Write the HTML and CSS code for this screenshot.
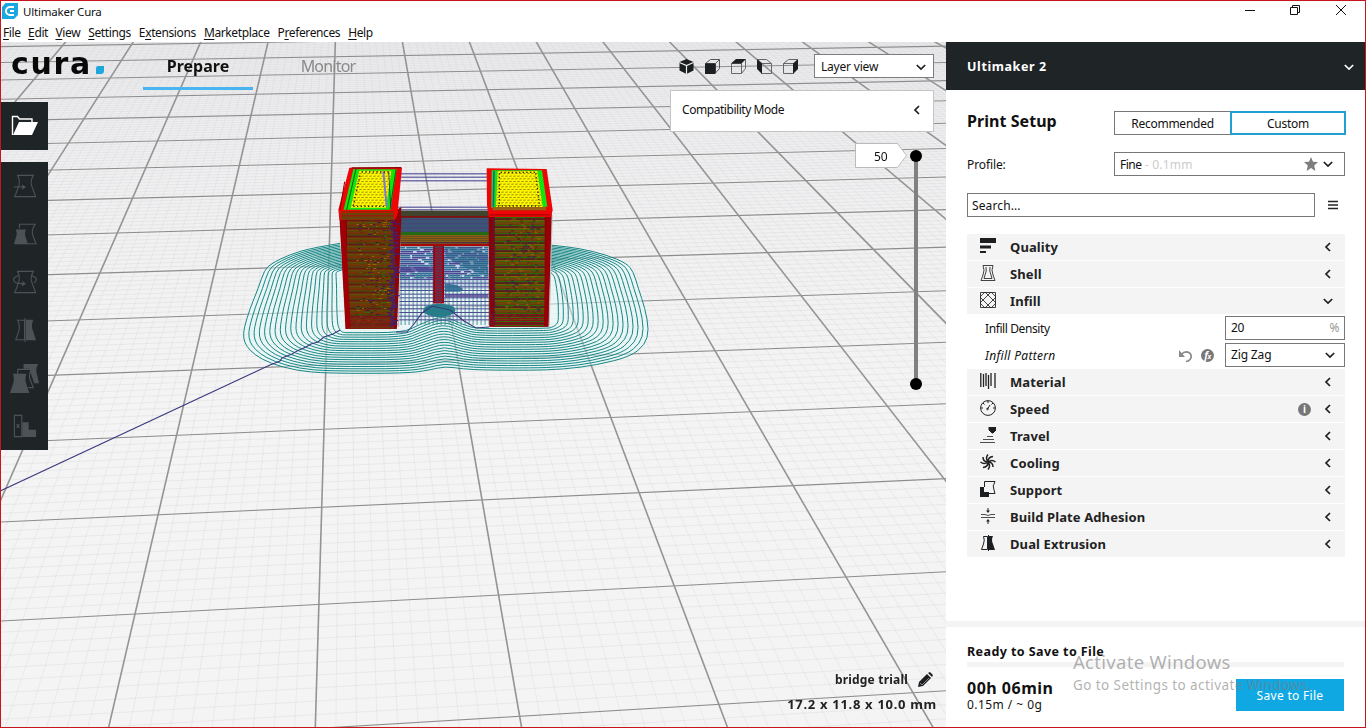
FILE: index.html
```
<!DOCTYPE html>
<html lang="en">
<head>
<meta charset="utf-8">
<title>Ultimaker Cura</title>
<link rel="stylesheet" href="styles.css">
</head>
<body>
<svg class="defs" width="0" height="0">
  <symbol id="left" viewBox="0 0 10 10"><path d="M7 1L3 5l4 4" fill="none" stroke="currentColor" stroke-width="1.7"/></symbol>
  <symbol id="down" viewBox="0 0 10 10"><path d="M.8 3L5 7l4.200-4" fill="none" stroke="currentColor" stroke-width="1.7"/></symbol>
</svg>
<div class="window">
  <header class="titlebar">
    <svg class="app-icon" width="16" height="16" viewBox="0 0 16 16"><path d="M3.500 0H16v12l-4 4H0V4z" fill="#19a9e0"/><path d="M12 4H8a4 4 0 0 0 0 8h4M12 8H8" fill="none" stroke="#fff" stroke-width="2"/></svg>
    <span class="app-title">Ultimaker Cura</span>
    <svg class="win-controls" width="104" height="12" viewBox="0 0 104 12" fill="none" stroke="#111"><path d="M0 6.500h10M45.500 3.500h7v7h-7zM47.500 3.500v-2h7v7h-2M91 1l10 10M101 1L91 11"/></svg>
  </header>
  <nav class="menubar">
    <span><u>F</u>ile</span><span><u>E</u>dit</span><span><u>V</u>iew</span><span><u>S</u>ettings</span><span>E<u>x</u>tensions</span><span><u>M</u>arketplace</span><span>P<u>r</u>eferences</span><span><u>H</u>elp</span>
  </nav>
  <main class="content">
    <section class="viewport">
      <canvas id="scene" class="scene" width="945" height="685"></canvas>
      <div class="stage-bar">
        <div class="logo"><span class="logo-word">cura</span><svg width="8" height="8" viewBox="0 0 8 8"><path d="M2 0h6v4.500Q8 8 5 8H0V3Q0 0 2 0z" fill="#1ea6dd"/></svg></div>
        <div class="tab tab-active">Prepare</div>
        <div class="tab tab-idle">Monitor</div>
        <div class="cubes">
          <svg viewBox="0 0 15 15"><path d="M7.500 0L14.500 3v8.500l-7 3.500-7-3.500V3z" fill="#1b1f22"/><path d="M.5 3.500l7 3 7-3M7.500 6.500V15" stroke="#eee" stroke-width="1.200" fill="none"/></svg>
          <svg viewBox="0 0 15 15"><path d="M.5 4.500l5-4h9l-4 4zM14.500.5v9l-4 4.500v-9.500" fill="none" stroke="#555"/><path d="M0 4.500h10.500V15H0z" fill="#1b1f22"/></svg>
          <svg viewBox="0 0 15 15"><path d="M.5 4.500h10v10H.5zM14.500.5v9l-4 5" fill="none" stroke="#666"/><path d="M0 4.500L5 0h10l-4.500 4.500z" fill="#1b1f22"/></svg>
          <svg viewBox="0 0 15 15"><path d="M4.500 4.500h10v10h-10zM.5.500h9l5 4" fill="none" stroke="#666"/><path d="M0 0l5 4.500V15L0 10z" fill="#1b1f22"/></svg>
          <svg viewBox="0 0 15 15"><path d="M.5 4.500h10v10H.5zM.5 4.500l5-4h9" fill="none" stroke="#666"/><path d="M10 4.500L15 0v10l-5 5z" fill="#1b1f22"/></svg>
        </div>
        <div class="view-select"><span>Layer view</span><svg class="chev"><use href="#down"/></svg></div>
      </div>
      <div class="compat"><span>Compatibility Mode</span><svg class="chev"><use href="#left"/></svg></div>
      <div class="work">
        <aside class="tools">
          <div class="tool tool-open"><svg width="28" height="22" viewBox="0 0 28 22"><path d="M1.500 20V1.500h5l2 2.500H21v3" fill="none" stroke="#fff" stroke-width="1.400"/><path d="M8 7h19l-6 13H2z" fill="#fff"/></svg></div>
          <div class="tool-group">
            <div class="tool"><svg viewBox="0 0 26 26"><path d="M5 1.500H22Q18 8 21 15L24.500 24.500H2L5.500 15Q8.500 8 5 1.500z"/><path d="M1 14h10"/><path class="solid" d="M10 11l4 3-4 3z"/></svg></div>
            <div class="tool"><svg viewBox="0 0 26 26"><path d="M7 7V2.500H24Q19 9 22 16L25 23.500H14"/><path class="solid" d="M3 8h11q-2 5 0 9l2 7H1l2-7q2-4 0-9z"/></svg></div>
            <div class="tool"><svg viewBox="0 0 26 26"><path d="M5 1.500H22Q18 8 21 15L24.500 24.500H2L5.500 15Q8.500 8 5 1.500z"/><path d="M6 6q-9 3-3 8l8 1M20 6q9 3 3 8"/><path class="solid" d="M10 12l4 3-4 3z"/></svg></div>
            <div class="tool"><svg viewBox="0 0 26 26"><path d="M5 2.500H12.500V23.500H3L6 15Q8 8 5 2.500zM13 0v26"/><path class="solid" d="M14 2h8q-3 7 0 13l3 9H14z"/></svg></div>
            <div class="tool"><svg class="wide" viewBox="0 0 30 30"><path class="solid" d="M14 0h15q-3 6-1 11l2 9h-5L20 5h-6z"/><path d="M8 11V5.500h14q-3 6-1 11l3 8h-5"/><path class="solid" d="M3 10h14q-2 6 0 11l3 9H0l3-9q2-5 0-11z"/></svg></div>
            <div class="tool"><svg viewBox="0 0 26 26"><path d="M1.500 1.500h8v23h-8zM4 11l3 4M7 11l-3 4"/><path class="solid" d="M10 9h7v8h8v8H10z"/></svg></div>
          </div>
        </aside>
        <div class="layer-slider">
          <svg width="70" height="250" viewBox="0 0 70 250"><path d="M1.500 2.500h42l9 12-9 12h-42z" fill="#fff" stroke="#bbb"/><path d="M62 15v228" stroke="#808080" stroke-width="4"/><circle cx="62" cy="15" r="6"/><circle cx="62" cy="243" r="6"/></svg>
          <span class="layer-value">50</span>
        </div>
      </div>
      <footer class="job">
        <div class="job-name"><span>bridge triall</span><svg width="16" height="16" viewBox="0 0 16 16"><path d="M1 15l1-5 8-8 4 4-8 8zM11 1l2-1 3 3-1 2z" fill="#1b1f22"/><path d="M3 11l2 2 7-7" fill="none" stroke="#eee" stroke-width=".5"/></svg></div>
        <div class="job-size">17.2 x 11.8 x 10.0 mm</div>
      </footer>
    </section>

    <section class="sidebar">
      <div class="machine"><span>Ultimaker 2</span><svg class="chev"><use href="#down"/></svg></div>
      <div class="setup">
        <div class="setup-head"><h1>Print Setup</h1><div class="modes"><div class="mode">Recommended</div><div class="mode mode-on">Custom</div></div></div>
        <div class="profile"><label>Profile:</label><div class="box profile-box"><span>Fine<i> - 0.1mm</i></span><svg class="star" viewBox="0 0 14 14"><path d="M7 0l2 4.700 5 .4-3.800 3.300L11.400 14 7 11l-4.400 3 1.200-5.600L0 5.100l5-.4z" fill="#7d7d7d"/></svg><svg class="chev"><use href="#down"/></svg></div></div>
        <div class="search"><div class="box search-box">Search...</div><svg width="10" height="10" viewBox="0 0 10 10"><path d="M0 1.500h10M0 5h10M0 8.500h10" stroke="#222" stroke-width="1.600"/></svg></div>
        <div class="settings">
          <div class="cat"><svg class="ico" viewBox="0 0 16 16"><path d="M0 0h16v5H0zM0 7.500h11v3H0zM0 13h6v2H0z" fill="#1b1f22"/></svg><b>Quality</b><svg class="chev"><use href="#left"/></svg></div>
          <div class="cat"><svg class="ico line" viewBox="0 0 16 16"><path d="M3 .5H13Q11 5 13 10L15 15.500H1L3 10Q5 5 3 .5zM6 2Q7 6 5 10L4 13.500H12L11 10Q9 6 10 2" stroke-width=".85"/></svg><b>Shell</b><svg class="chev"><use href="#left"/></svg></div>
          <div class="cat"><svg class="ico line" viewBox="0 0 16 16"><path d="M.5.5h15v15H.5zM0 5l5-5M0 11L11 0M5 16L16 5M11 16l5-5M11 0l5 5M5 0l11 11M0 5l11 11M0 11l5 5" stroke-width=".85"/></svg><b>Infill</b><svg class="chev"><use href="#down"/></svg></div>
          <div class="field"><span>Infill Density</span><div class="box value-box"><span>20</span><em>%</em></div></div>
          <div class="field"><span class="changed">Infill Pattern</span>
            <svg class="undo" width="14" height="14" viewBox="0 0 14 14"><path d="M2 5.500Q6 1.500 10 3.500q4 3 1 7-1.500 2-4 2" fill="none" stroke="#888" stroke-width="1.600"/><path d="M0 1v7h6z" fill="#888"/></svg>
            <span class="fx">f<small>x</small></span>
            <div class="box value-box"><span class="zig">Zig Zag</span><svg class="chev"><use href="#down"/></svg></div></div>
          <div class="cat"><svg class="ico line" viewBox="0 0 16 16"><path d="M.8 0v14M3.500 1v13M6 0v13M8.500 2v14M11 0v13M15 0v15" stroke-width="1.300"/></svg><b>Material</b><svg class="chev"><use href="#left"/></svg></div>
          <div class="cat"><svg class="ico line" viewBox="0 0 16 16"><circle cx="8" cy="8" r="7.400"/><path d="M8 1v2M1 8h2M13 8h2M3 3l1.500 1.500M13 3l-1.500 1.500M7.500 9L10 5"/><circle cx="7.500" cy="9" r=".8"/></svg><b>Speed</b><span class="info">i</span><svg class="chev"><use href="#left"/></svg></div>
          <div class="cat"><svg class="ico line" viewBox="0 0 16 16"><path d="M9 0h7v3l-3 3h-1L9 3z" fill="#1b1f22"/><path d="M7 9.500h6M3 12.500h11M0 15.500h15" stroke-width=".8"/></svg><b>Travel</b><svg class="chev"><use href="#left"/></svg></div>
          <div class="cat"><svg class="ico line" viewBox="0 0 16 16"><path d="M8 8Q5 4 8 .5M8 8Q8 3 13 2.500M8 8q4-3 7.500 0M8 8q5 0 5 5M8 8q3 4 0 7.500M8 8q0 5-5 5.500M8 8q-4 3-7.500 0M8 8Q3 8 3 3" stroke-width="1.500"/></svg><b>Cooling</b><svg class="chev"><use href="#left"/></svg></div>
          <div class="cat"><svg class="ico line" viewBox="0 0 16 16"><path d="M4.500 6V.5H15Q12 5 14 9L15 12.500H9"/><path d="M0 6h4v5h5v5H0z" fill="#1b1f22" stroke="none"/></svg><b>Support</b><svg class="chev"><use href="#left"/></svg></div>
          <div class="cat"><svg class="ico line" viewBox="0 0 16 16"><path d="M1 6.500h4l3 1 3-1h4M1 9.500h14" stroke-width=".8"/><path d="M8 0v3M8 13v3"/><path d="M6 2.500h4L8 5zM6 13.500h4L8 11z" fill="#222" stroke="none"/></svg><b>Build Plate Adhesion</b><svg class="chev"><use href="#left"/></svg></div>
          <div class="cat"><svg class="ico line" viewBox="0 0 16 16"><path d="M3.500 1.500H7.500V14.500H1.500L3.500 9Q5 5 3.500 1.500z"/><path d="M8 0h1v1h4q-2 4 0 8l2 6H9v1H8z" fill="#1b1f22" stroke="none"/></svg><b>Dual Extrusion</b><svg class="chev"><use href="#left"/></svg></div>
        </div>
      </div>
      <div class="save">
        <div class="ready">Ready to Save to File</div>
        <div class="progress"></div>
        <div class="save-row"><div><div class="time">00h 06min</div><div class="usage">0.15m / ~ 0g</div></div><div class="save-button">Save to File</div></div>
      </div>
      <div class="watermark"><div class="wm-title">Activate Windows</div><div class="wm-text">Go to Settings to activate Windows.</div></div>
    </section>
  </main>
</div>
<script src="scene.js"></script>
</body>
</html>
```
FILE: styles.css
```
* { box-sizing: border-box; }
body { margin: 0; font: 12px/16px "Noto Sans", "Open Sans", sans-serif; color: #111; background: #fff; }
.defs { position: absolute; }
.window { width: 1366px; height: 728px; border: 1px solid #c8141c; display: flex; flex-direction: column; overflow: hidden; }
.titlebar { height: 22px; display: flex; align-items: flex-start; padding: 2px 16px 0 1px; flex: none; }
.app-title { margin-left: 5px; line-height: 18px; font-size: 11.500px; letter-spacing: -.2px; }
.win-controls { margin-left: auto; margin-top: 1px; }
.menubar { height: 19px; flex: none; display: flex; gap: 8px; padding: 1px 0 0 2px; line-height: 17px; letter-spacing: -.38px; white-space: nowrap; }
.menubar span:first-child, .menubar span:nth-child(2) { margin-right: -.6px; }
.menubar u { text-underline-offset: 2px; }
.content { display: flex; flex: 1; min-height: 0; }

.viewport { width: 945px; height: 685px; position: relative; display: flex; flex-direction: column; background: #f1f1f2; }
.scene { position: absolute; left: 0; top: 0; }
.viewport > div, .viewport > footer { position: relative; }
.stage-bar { height: 48px; display: flex; align-items: center; flex: none; padding-right: 12px; }
.logo { width: 142px; padding-left: 10px; display: flex; align-items: baseline; }
.logo svg { margin-bottom: 2px; }
.logo-word { font: bold 30px/40px "DejaVu Sans", sans-serif; letter-spacing: 1.700px; width: 85px; height: 40px; margin-top: -4px; color: #080808; }
.tab { width: 110px; height: 48px; text-align: center; font-size: 16px; line-height: 48px; color: #898989; margin-right: 20px; }
.tab-active { color: #111; font-weight: bold; border-bottom: 3px solid #4ab4f0; }
.tab-idle { letter-spacing: -.8px; }
.cubes { margin-left: auto; display: flex; gap: 11px; margin-right: 16px; }
.cubes svg { width: 15px; height: 15px; }
.chev { width: 10px; height: 10px; color: #1b1f22; flex: none; }
.view-select { width: 120px; height: 24px; border: 1px solid #7d7d7d; background: #fff; display: flex; align-items: center; justify-content: space-between; padding: 1px 7px 0 6px; letter-spacing: -.2px; }
.compat { width: 264px; height: 42px; margin-left: 669px; flex: none; border: 1px solid #c4c4c4; background: #fff; display: flex; align-items: center; justify-content: space-between; padding: 0 11px 3px; letter-spacing: -.45px; }
.work { flex: 1; display: flex; justify-content: space-between; align-items: flex-start; }
.tools { width: 47px; margin-top: -30px; }
.tool-group { margin-top: 12px; background: #1f2427; }
.tool { height: 48px; display: flex; align-items: center; justify-content: center; }
.tool-open { background: #1f2427; }
.tool-group svg { width: 24px; height: 24px; fill: none; stroke: #4c5357; stroke-width: 1.2; }
.tool-group .wide { width: 29px; height: 29px; }
.tool-group .solid { fill: #4c5357; stroke: none; }
.layer-slider { position: relative; margin: 9px 22px 0 0; width: 70px; }
.layer-value { position: absolute; left: 20px; top: 8px; }
.job { text-align: right; padding: 0 9px 15px 0; font-weight: bold; color: #222; }
.job-name { display: flex; gap: 9px; justify-content: flex-end; align-items: center; margin-bottom: 8px; padding-right: 4px; letter-spacing: .2px; }
.job-size { letter-spacing: .7px; font-size: 13px; }

.sidebar { width: 419px; position: relative; display: flex; flex-direction: column; background: #fff; }
.machine { height: 48px; flex: none; background: #1f2427; color: #fff; font-weight: bold; font-size: 12.500px; letter-spacing: .6px; display: flex; align-items: center; justify-content: space-between; padding: 1px 11px 0 21px; }
.machine .chev { color: #fff; }
.setup { height: 531px; padding: 21px 20px 0 21px; }
.setup-head { display: flex; justify-content: space-between; height: 24px; }
h1 { margin: 0; font-size: 16px; line-height: 20px; letter-spacing: .05px; }
.modes { display: flex; width: 232px; margin-right: -1px; }
.mode { width: 116px; border: 1px solid #777; border-right: 0; text-align: center; line-height: 23px; letter-spacing: -.25px; }
.mode-on { border: 2px solid #209fd0; line-height: 21px; }
.profile { display: flex; justify-content: space-between; align-items: center; margin-top: 17px; height: 24px; }
.profile label { padding-top: 2px; letter-spacing: -.1px; }
.box { border: 1px solid #777; background: #fff; display: flex; align-items: center; height: 24px; }
.profile-box { width: 231px; padding: 0 11px 0 5px; }
.profile-box span { padding-top: 1px; letter-spacing: -.5px; }
.profile-box i { font-style: normal; color: #ccc; letter-spacing: .2px; }
.star { width: 14px; height: 14px; margin: 0 5px 0 auto; }
.search { display: flex; align-items: center; margin-top: 17px; gap: 13px; }
.search-box { width: 348px; padding: 1px 0 0 4px; letter-spacing: .12px; }
.settings { margin-top: 17px; }
.cat { height: 26px; margin-bottom: 1px; background: #f4f4f4; display: flex; align-items: center; padding: 0 12px 0 13px; }
.cat b { font-size: 13px; margin-left: 14px; margin-right: auto; color: #222; letter-spacing: .1px; }
.ico { width: 16px; height: 16px; flex: none; transform: translateY(-1px); }
.line { fill: none; stroke: #222; stroke-width: 1; }
.field { height: 27px; display: flex; align-items: center; padding-left: 18px; letter-spacing: -.4px; }
.changed { font-style: italic; letter-spacing: .3px; }
.value-box { width: 120px; margin-left: auto; justify-content: space-between; padding: 0 9px 0 5px; margin-bottom: 1px; }
.zig { letter-spacing: -.15px; }
.value-box em { color: #999; font-style: normal; margin-right: -4px; }
.undo { margin-left: auto; margin-right: 8px; }
.fx, .info { width: 13px; height: 13px; border-radius: 50%; background: #777; color: #fff; text-align: center; line-height: 12px; font-size: 10px; font-weight: bold; }
.fx { font-style: italic; margin-right: 11px; }
.fx small { font-size: 7px; }
.fx + .value-box { margin-left: 0; }
.info { margin-right: 12px; }
.save { border-top: 6px solid #f4f4f4; height: 106px; padding: 17px 21px 0; }
.ready { font-weight: bold; font-size: 12.500px; letter-spacing: .42px; }
.progress { height: 5px; background: #f4f4f4; margin-top: 2px; }
.save-row { display: flex; justify-content: space-between; align-items: flex-start; margin-top: 12px; }
.time { font-size: 16px; font-weight: bold; line-height: 18px; letter-spacing: .5px; }
.usage { line-height: 16px; letter-spacing: .45px; }
.save-button { width: 108px; height: 32px; background: #10a8e3; color: #fff; text-align: center; line-height: 33px; letter-spacing: .3px; }
.watermark { position: absolute; left: 127px; top: 608px; color: rgba(125,125,125,.6); white-space: nowrap; }
.wm-title { font-size: 18.500px; line-height: 24px; letter-spacing: .3px; }
.wm-text { font-size: 13.500px; line-height: 20px; letter-spacing: .42px; margin-top: 1px; }
```
FILE: scene.js
```
const ctx = document.getElementById('scene').getContext('2d');
// Scene units are window pixels; the canvas begins at (1, 42).
ctx.translate(-1, -42);
const bg = ctx.createLinearGradient(0, 42, 0, 400);
bg.addColorStop(0, '#ededef');
bg.addColorStop(1, '#f4f4f4');
ctx.fillStyle = bg;
ctx.fillRect(0, 42, 946, 686);

// Perspective map from the unit square to four screen corners.
function projector(p0, p1, p2, p3) {
  const dx1 = p1[0] - p2[0], dx2 = p3[0] - p2[0], sx = p0[0] - p1[0] + p2[0] - p3[0];
  const dy1 = p1[1] - p2[1], dy2 = p3[1] - p2[1], sy = p0[1] - p1[1] + p2[1] - p3[1];
  const det = dx1 * dy2 - dx2 * dy1;
  const g = (sx * dy2 - dx2 * sy) / det, h = (dx1 * sy - sx * dy1) / det;
  const a = p1[0] - p0[0] + g * p1[0], b = p3[0] - p0[0] + h * p3[0];
  const d = p1[1] - p0[1] + g * p1[1], e = p3[1] - p0[1] + h * p3[1];
  return (u, v) => {
    const w = g * u + h * v + 1;
    return [(a * u + b * v + p0[0]) / w, (d * u + e * v + p0[1]) / w];
  };
}
const unit = projector([135, 614], [846, 577], [588, 131.3], [245.5, 139]);
const plate = (i, j) => unit((i - 3) / 4, j / 9);

function line(a, b, color, width) {
  ctx.strokeStyle = color;
  ctx.lineWidth = width;
  ctx.beginPath();
  ctx.moveTo(...a);
  ctx.lineTo(...b);
  ctx.stroke();
}
for (let k = -60; k <= 190; k++) if (k % 10) line(plate(k / 10, -2), plate(k / 10, 17), 'rgba(205,205,208,.25)', 1);
for (let k = -20; k <= 170; k++) if (k % 10) line(plate(-6, k / 10), plate(19, k / 10), 'rgba(205,205,208,.3)', 1);
for (let j = -2; j <= 17; j++) line(plate(-6, j), plate(19, j), '#8c8c8c', 1.1);
for (let i = -6; i <= 19; i++) line(plate(i, -2), plate(i, 17), '#949494', 1.6);

// Model points are stored at three times the screen scale.
ctx.save();
ctx.translate(230, 155);
ctx.scale(1 / 3, 1 / 3);

// Brim: outer loop and inner loop points, blended into evenly spaced rings.
const outer = [[330,265],[250,278],[180,298],[125,325],[103,345],[85,400],[60,460],[42,520],[40,550],[50,575],[75,600],[120,625],[200,647],[290,655],[530,655],[600,645],[645,634],[700,642],[760,645],[900,646],[1000,643],[1100,630],[1200,605],[1245,570],[1257,525],[1245,460],[1225,400],[1210,350],[1190,325],[1130,300],[1050,280],[960,270]];
const inner = [[340,345],[335,345],[325,348],[318,352],[318,360],[320,400],[320,450],[322,500],[325,515],[330,525],[335,530],[340,532],[345,533],[350,533],[520,533],[565,510],[640,480],[700,510],[745,522],[955,520],[965,517],[975,512],[982,505],[985,495],[985,480],[985,440],[980,400],[975,370],[970,360],[965,355],[960,350],[955,348]];
function ring(t) {
  const p = outer.map((o, k) => [o[0] + (inner[k][0] - o[0]) * t, o[1] + (inner[k][1] - o[1]) * t]);
  ctx.beginPath();
  ctx.moveTo(...p[0]);
  for (let k = 1; k < p.length - 1; k++) {
    ctx.quadraticCurveTo(p[k][0], p[k][1], (p[k][0] + p[k + 1][0]) / 2, (p[k][1] + p[k + 1][1]) / 2);
  }
  ctx.lineTo(...p[p.length - 1]);
}
ring(0);
ctx.fillStyle = 'rgba(228,250,250,.5)';
ctx.fill();
for (let k = 0; k < 19; k++) {
  ring(k / 18);
  ctx.strokeStyle = '#0f8280';
  ctx.lineWidth = 2.9;
  ctx.stroke();
}

const rect = (x, y, w, h, c) => { ctx.fillStyle = c; ctx.fillRect(x, y, w, h); };
function poly(points, fill) {
  ctx.beginPath();
  points.forEach(p => ctx.lineTo(...p));
  ctx.closePath();
  ctx.fillStyle = fill;
  ctx.fill();
}
let seed = 7;
const rnd = () => (seed = (seed * 16807) % 2147483647) / 2147483647;

// Space under the bridge.
rect(500, 272, 280, 130, 'rgba(190,203,226,.8)');
for (let y = 276; y < 372; y += 6) {
  for (let x = 505; x < 775;) {
    const w = 20 + rnd() * 65;
    rect(x, y, Math.min(w, 775 - x), 4.5, rnd() < .4 ? '#4a4592' : '#2f6b94');
    x += w + rnd() * 13;
  }
}
for (let x = 512; x < 778; x += 12) rect(x, 355, 2.5, 155, '#357f91');
for (let y = 372; y < 500; y += 11) rect(500, y, 278, 3, '#4c4a91');
poly([[645,275],[740,278],[775,300],[775,360],[720,345],[650,310]], 'rgba(40,100,135,.55)');
poly([[500,335],[610,335],[610,350],[500,350]], 'rgba(75,63,146,.75)');
poly([[645,385],[680,390],[700,402],[690,410],[645,410]], 'rgba(47,107,148,.9)');
rect(645, 417, 130, 10, 'rgba(75,63,146,.75)');
ctx.fillStyle = '#267c88';
ctx.beginPath();
ctx.ellipse(628, 466, 48, 20, 0, 0, 7);
ctx.fill();
rect(610, 270, 32, 175, '#64304f');
rect(610, 270, 5, 175, '#9b0010');
rect(637, 270, 5, 175, '#9b0010');
for (let y = 280; y < 445; y += 9) rect(615, y, 22, 3, '#a30d17');

// Travel moves between the towers.
for (const y of [55, 65, 76, 155, 163]) rect(500, y, 280, 3, '#3b3a8c');

// Bridge deck.
rect(495, 167, 285, 107, '#42432c');
rect(495, 183, 285, 5, '#801014');
rect(495, 189, 285, 42, '#3b5672');
for (let y = 193; y < 230; y += 12) rect(495, y, 285, 3, '#484280');
rect(495, 231, 285, 9, '#236a16');
for (let y = 241; y < 266; y += 6) rect(495, y, 285, 3, '#b06a06');
rect(495, 262, 285, 3, '#3d205c');
rect(495, 267, 285, 6, '#a80808');

function tower(face, x0, x1, top, bottom) {
  const width = x1 - x0;
  poly(face, '#8b0004');
  ctx.save();
  ctx.clip();
  const shades = ['#6f440a', '#3a6408', '#7d5604', '#55241c', '#286c0c', '#6a3a0c'];
  for (let y = top, k = 0; y < bottom; y += 3, k++) rect(x0 + 18, y, width - 34, 3, shades[(k * 5 + (k >> 2)) % 6]);
  for (let k = 0; k < 300; k++) {
    rect(x0 + 45 + rnd() * (width - 80), top + 10 + Math.floor(rnd() * (bottom - top - 20) / 6) * 6, 3 + rnd() * 9, 3, ['#3a1b4c', '#5c2c0c', '#9c6206', '#31650a'][k % 4]);
  }
  for (let y = bottom - 38; y < bottom; y += 6) rect(x0, y, width, 3, '#86121a');
  ctx.restore();
}
line([331, 180], [348, 522], '#c4bcbc', 5);
line([965, 180], [956, 515], '#c4bcbc', 6);
line([511, 155], [505, 515], '#c4bcbc', 5);
tower([[328,180],[510,165],[514,190],[500,522],[347,522]], 333, 510, 185, 522);
tower([[776,180],[965,175],[955,515],[778,515]], 776, 960, 180, 515);
poly([[485,175],[514,155],[508,350],[500,520],[492,520],[498,350]], '#900006');
for (let y = 180; y < 515; y += 5) rect(474 + rnd() * 18, y, 8 + rnd() * 14, 4, '#42206c');
poly([[330,190],[346,190],[362,515],[348,522]], '#9f0006');
poly([[950,185],[963,185],[954,512],[942,512]], '#970006');
for (let y = 190; y < 510; y += 7) rect(780 + rnd() * 12, y, 8, 3, '#43205c');

// Top surfaces: outer wall, inner wall, skin.
function cap(a, b, c) {
  poly(a, '#ee0505');
  poly(b, '#10e510');
  poly(c, '#fff500');
  ctx.save();
  ctx.clip();
  for (let y = 48; y < 160; y += 8) for (let x = 340; x < 960; x += 12) line([x + (y % 16 ? 0 : 6), y], [x + 7 + (y % 16 ? 0 : 6), y - 1], '#6b6a00', 2.2);
  ctx.restore();
}
cap([[358,38],[516,38],[502,180],[495,194],[328,194],[325,164]], [[370,43],[500,43],[482,164],[341,164]], [[388,47],[484,47],[468,158],[362,158]]);
cap([[770,40],[950,42],[968,165],[963,186],[776,186],[771,150]], [[785,46],[936,46],[952,155],[784,158]], [[803,48],[922,48],[938,156],[798,156]]);
rect(333, 169, 158, 3, '#6e3500');
rect(333, 174, 158, 20, '#67450b');
rect(333, 181, 158, 3, '#b20b08');
rect(788, 156, 160, 10, '#986113');
rect(780, 178, 180, 3, '#a00000');
line([378, 42], [350, 164], '#123c0c', 2.5);
line([498, 44], [480, 164], '#123c0c', 2.5);
line([344, 80], [330, 165], '#8a0000', 3);
line([460, 50], [470, 155], '#7c78d8', 6);
line([476, 50], [482, 155], '#222a5c', 2.5);
line([792, 48], [790, 155], '#3158a0', 5);
line([365, 39], [514, 38], '#8a0808', 4);
ctx.setLineDash([4, 7]);
for (const [a, b] of [[[395,51],[478,51]], [[390,62],[370,152]], [[370,154],[464,154]], [[812,52],[915,52]], [[917,55],[928,148]], [[808,55],[808,150]], [[804,153],[928,153]]]) line(a, b, '#282500', 4);
ctx.setLineDash([]);
ctx.restore();

// Approach move of the print head.
ctx.strokeStyle = '#39387f';
ctx.lineWidth = 1.1;
ctx.beginPath();
[[0,491],[270,365],[280,361],[282,358],[292,354],[297,351],[306,347],[311,344],[318,342],[324,337],[333,334],[340,330]].forEach(p => ctx.lineTo(...p));
ctx.stroke();
ctx.beginPath();
[[396,332],[407,332],[414,324],[422,313],[432,306],[450,310],[464,321],[476,328],[489,327]].forEach(p => ctx.lineTo(...p));
ctx.stroke();
```
